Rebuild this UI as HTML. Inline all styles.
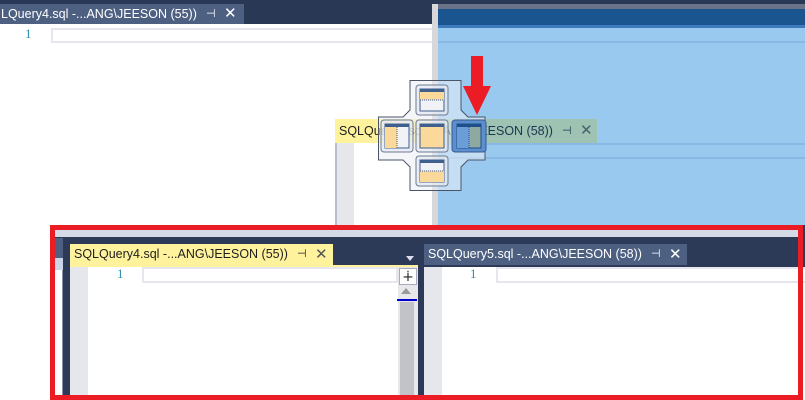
<!DOCTYPE html>
<html><head><meta charset="utf-8"><style>
*{margin:0;padding:0;box-sizing:border-box}
body{width:805px;height:400px;overflow:hidden;background:#fff;position:relative;font-family:"Liberation Sans","Microsoft YaHei",sans-serif}
.a{position:absolute}
.t{font-size:12.5px;line-height:21px;white-space:nowrap}
.ln{color:#2b91af;font-size:13px;font-family:"Liberation Serif",serif}
</style></head><body>
<!-- top -->
<div class="a" style="left:0;top:0;width:805px;height:24px;background:#293955"></div>
<div class="a t" style="left:0;top:4px;width:244px;height:20px;background:#4d6082;color:#fff;padding-left:1px;line-height:20px">LQuery4.sql -...ANG\JEESON (55))<span style="position:absolute;left:206px;font-size:11px">⊣</span><span style="position:absolute;left:224px;font-size:15px">✕</span></div>
<div class="a ln" style="left:25px;top:26px">1</div>
<div class="a" style="left:51px;top:28px;width:760px;height:15px;border:2px solid #e6e7ee"></div>
<!-- floating doc -->
<div class="a" style="left:335px;top:143px;width:2px;height:85px;background:#b8bdcc"></div>
<div class="a" style="left:337px;top:143px;width:17px;height:85px;background:#e6e7ea"></div>
<div class="a" style="left:354px;top:143px;width:90px;height:85px;background:#fff"></div>
<div class="a t" style="left:335px;top:119px;width:262px;height:24px;background:#fff29d;color:#1e1e1e;line-height:24px;padding-left:4px">SQLQuery5.sql -...ANG\JEESON (58))<span style="position:absolute;left:227px;font-size:11px">⊣</span><span style="position:absolute;left:245px;font-size:15px;color:#555">✕</span></div>
<!-- overlay -->
<div class="a" style="left:432px;top:4px;width:6px;height:224px;background:#d8d8da"></div>
<div class="a" style="left:438px;top:4px;width:367px;height:224px;background:#99c9ef"></div>
<div class="a" style="left:438px;top:4px;width:367px;height:5px;background:#6a7388"></div>
<div class="a" style="left:438px;top:9px;width:367px;height:16px;background:#1a5590"></div>
<div class="a" style="left:438px;top:25px;width:367px;height:3px;background:#3d7bbd"></div>
<div class="a" style="left:438px;top:41px;width:367px;height:2px;background:#8ab8e4"></div>
<div class="a" style="left:438px;top:143px;width:367px;height:2px;background:#8ab8e4"></div>
<div class="a" style="left:438px;top:157px;width:367px;height:2px;background:#8ab8e4"></div>
<div class="a" style="left:438px;top:119px;width:159px;height:24px;background:#9ec3b3"></div>
<div class="a t" style="left:335px;top:119px;width:262px;height:24px;color:#1e3550;line-height:24px;padding-left:4px;clip-path:inset(0 0 0 103px)">SQLQuery5.sql -...ANG\JEESON (58))<span style="position:absolute;left:227px;font-size:11px">⊣</span><span style="position:absolute;left:245px;font-size:15px;color:#4a6070">✕</span></div>
<!-- dock guide -->
<svg class="a" style="left:378px;top:80px" width="115" height="115" viewBox="0 0 115 115">
<path d="M32 .5H83V30L90 37H107V80H90L83 87V110.5H32V87L25 80H.5V37H25L32 30Z" fill="rgba(235,238,245,.55)" stroke="#4a5568"/>
<g stroke="#6c7a92" fill="rgba(230,233,240,.7)">
<rect x="38" y="5" width="32" height="30" rx="3"/><rect x="38" y="40" width="32" height="32" rx="3"/><rect x="38" y="76" width="32" height="30" rx="3"/><rect x="3" y="40" width="32" height="32" rx="3"/></g>
<rect x="74" y="40" width="34" height="32" rx="3" fill="#5c8fcf" stroke="#3a5a8a"/>
<g>
<rect x="42" y="9" width="24" height="22" fill="#f0f2f6" stroke="#3f5f8f"/><rect x="42" y="9" width="24" height="11" fill="#fbd99a"/><rect x="42" y="9" width="24" height="3" fill="#3f5f8f"/><line x1="42" y1="20" x2="66" y2="20" stroke="#3f5f8f" stroke-dasharray="1 1"/>
<rect x="42" y="80" width="24" height="22" fill="#f0f2f6" stroke="#3f5f8f"/><rect x="42" y="91" width="24" height="11" fill="#fbd99a"/><rect x="42" y="80" width="24" height="3" fill="#3f5f8f"/><line x1="42" y1="91" x2="66" y2="91" stroke="#3f5f8f" stroke-dasharray="1 1"/>
<rect x="42" y="44" width="24" height="24" fill="#fbd99a" stroke="#3f5f8f"/><rect x="42" y="44" width="24" height="3" fill="#3f5f8f"/>
<rect x="7" y="44" width="24" height="24" fill="#f0f2f6" stroke="#3f5f8f"/><rect x="7" y="44" width="12" height="24" fill="#fbd99a"/><rect x="7" y="44" width="24" height="3" fill="#3f5f8f"/><line x1="19" y1="47" x2="19" y2="68" stroke="#3f5f8f" stroke-dasharray="1 1"/>
<rect x="79" y="44" width="24" height="24" fill="#8fa9a0" stroke="#1f4f8a"/><rect x="79" y="44" width="12" height="24" fill="#6b9ed6"/><rect x="79" y="44" width="24" height="3" fill="#1f4f8a"/><line x1="91" y1="47" x2="91" y2="68" stroke="#1f4f8a" stroke-dasharray="1 1"/>
</g></svg>
<svg class="a" style="left:462px;top:56px" width="30" height="60"><path d="M9 0H21V30H29L15 59L1 30H9Z" fill="#ec1c24"/></svg>
<!-- bottom region -->
<div class="a" style="left:50px;top:225px;width:755px;height:175px;background:#2c3a57"></div>
<div class="a" style="left:55px;top:230px;width:745px;height:7px;background:#d5dae8"></div>
<div class="a" style="left:55px;top:238px;width:8px;height:20px;background:#4d6082"></div>
<div class="a" style="left:55px;top:258px;width:8px;height:12px;background:#ccd5e8"></div>
<div class="a" style="left:55px;top:270px;width:8px;height:130px;background:#fff;border-right:1px solid #8890a8"></div>
<div class="a t" style="left:70px;top:244px;width:263px;height:21px;background:#fff29d;color:#1e1e1e;padding-left:4px">SQLQuery4.sql -...ANG\JEESON (55))<span style="position:absolute;left:227px;font-size:11px">⊣</span><span style="position:absolute;left:245px;font-size:15px;color:#555">✕</span></div>
<div class="a" style="left:70px;top:265px;width:348px;height:2px;background:#fff29d"></div>
<div class="a" style="left:70px;top:267px;width:18px;height:133px;background:#e6e7ed"></div>
<div class="a" style="left:88px;top:267px;width:310px;height:133px;background:#fff"></div>
<div class="a ln" style="left:117px;top:266px">1</div>
<div class="a" style="left:142px;top:267px;width:256px;height:16px;border:2px solid #e6e7ee"></div>
<div class="a" style="left:398px;top:267px;width:20px;height:133px;background:#e8e8ec"></div>
<div class="a" style="left:399px;top:268px;width:18px;height:17px;background:#fff;border:1px solid #aab;font-size:14px;text-align:center;line-height:14px;color:#222">∔</div>
<div class="a" style="left:401px;top:288px;width:0;height:0;border:5px solid transparent;border-bottom:6px solid #999;border-top:0"></div>
<div class="a" style="left:397px;top:299px;width:20px;height:2px;background:#0000cc"></div>
<div class="a" style="left:400px;top:302px;width:14px;height:98px;background:#c2c3c9"></div>
<div class="a" style="left:406px;top:256px;width:0;height:0;border:4px solid transparent;border-top:5px solid #dde;border-bottom:0"></div>
<div class="a t" style="left:424px;top:244px;width:263px;height:21px;background:#4d6082;color:#fff;padding-left:4px">SQLQuery5.sql -...ANG\JEESON (58))<span style="position:absolute;left:227px;font-size:11px">⊣</span><span style="position:absolute;left:245px;font-size:15px">✕</span></div>
<div class="a" style="left:424px;top:267px;width:18px;height:133px;background:#e6e7ed"></div>
<div class="a" style="left:442px;top:267px;width:363px;height:133px;background:#fff"></div>
<div class="a ln" style="left:470px;top:266px">1</div>
<div class="a" style="left:496px;top:267px;width:320px;height:16px;border:2px solid #e6e7ee"></div>
<!-- red frame -->
<div class="a" style="left:50px;top:225px;width:753px;height:175px;border:5px solid #ec1c24"></div>
</body></html>
